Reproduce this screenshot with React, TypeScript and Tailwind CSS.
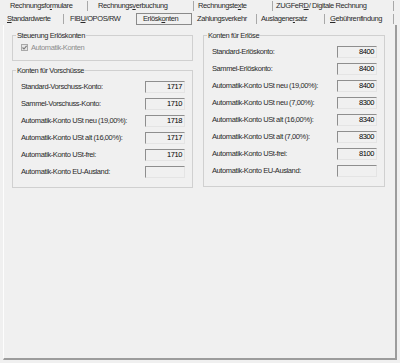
import React from 'react';

type Row = { label: string; value: string };

const vorschuss: Row[] = [
  { label: 'Standard-Vorschuss-Konto:', value: '1717' },
  { label: 'Sammel-Vorschuss-Konto:', value: '1710' },
  { label: 'Automatik-Konto USt neu (19,00%):', value: '1718' },
  { label: 'Automatik-Konto USt alt (16,00%):', value: '1717' },
  { label: 'Automatik-Konto USt-frei:', value: '1710' },
  { label: 'Automatik-Konto EU-Ausland:', value: '' },
];

const erloese: Row[] = [
  { label: 'Standard-Erlöskonto:', value: '8400' },
  { label: 'Sammel-Erlöskonto:', value: '8400' },
  { label: 'Automatik-Konto USt neu (19,00%):', value: '8400' },
  { label: 'Automatik-Konto USt neu (7,00%):', value: '8300' },
  { label: 'Automatik-Konto USt alt (16,00%):', value: '8340' },
  { label: 'Automatik-Konto USt alt (7,00%):', value: '8300' },
  { label: 'Automatik-Konto USt-frei:', value: '8100' },
  { label: 'Automatik-Konto EU-Ausland:', value: '' },
];

// underline the mnemonic letter like a win32 tab caption
const Mn: React.FC<{ pre: string; key_: string; post: string }> = ({ pre, key_, post }) => (
  <span className="whitespace-nowrap">
    {pre}
    <span className="underline underline-offset-1">{key_}</span>
    {post}
  </span>
);

const AccountRow: React.FC<{ row: Row }> = ({ row }) => (
  <div className="flex h-[17px] items-center justify-between">
    <span className="whitespace-nowrap">{row.label}</span>
    <div className="flex h-[12px] w-[40px] items-center justify-end border-t border-l border-b border-r border-t-[#8e8e8e] border-l-[#8e8e8e] border-b-[#e4e4e4] border-r-[#e4e4e4] pr-[2px] text-black">
      {row.value}
    </div>
  </div>
);

const Group: React.FC<{ title: string; className?: string; children: React.ReactNode }> = ({ title, className = '', children }) => (
  <fieldset className={`border border-[#d0d0d0] px-0 ${className}`}>
    <legend className="ml-[3px] px-[1px] leading-[9px]">{title}</legend>
    {children}
  </fieldset>
);

export default function App() {
  return (
    <div className="h-[363px] w-[400px] overflow-hidden bg-[#f0f0f0] font-['Liberation_Sans',Arial,sans-serif] text-[7.5px] leading-[9px] tracking-[-0.4px] text-[#2a2a2a]">
      {/* tab row 1 */}
      <div className="flex h-[12px] items-center">
        <div className="h-[10px] w-[88px] border-r border-[#a8a8a8] pl-[10px]">
          <Mn pre="Rechnungsfo" key_="r" post="mulare" />
        </div>
        <div className="h-[10px] w-[106px] border-r border-[#a8a8a8] pl-[10px]">
          <Mn pre="Rechnungs" key_="v" post="erbuchung" />
        </div>
        <div className="h-[10px] w-[79px] border-r border-[#a8a8a8] pl-[4px]">
          <Mn pre="Rechnungste" key_="x" post="te" />
        </div>
        <div className="h-[10px] w-[121px] border-r border-[#a8a8a8] pl-[3px]">
          <Mn pre="ZUGFeR" key_="D" post="/ Digitale Rechnung" />
        </div>
      </div>

      {/* tab row 2 */}
      <div className="flex h-[13px] items-center">
        <div className="h-[10px] w-[64px] border-r border-[#a8a8a8] pl-[7px]">
          <Mn pre="" key_="S" post="tandardwerte" />
        </div>
        <div className="h-[10px] w-[72px] pl-[6px]">
          <Mn pre="FIB" key_="U" post="/OPOS/RW" />
        </div>
        <div className="flex h-[12px] w-[56px] items-center border border-[#8a8a8a] pl-[6px]">
          <Mn pre="Erlösk" key_="o" post="nten" />
        </div>
        <div className="h-[10px] w-[65px] border-r border-[#a8a8a8] pl-[5px]">
          <span className="whitespace-nowrap">Zahlungsverkehr</span>
        </div>
        <div className="h-[10px] w-[68px] border-r border-[#a8a8a8] pl-[4px]">
          <Mn pre="Auslagene" key_="r" post="satz" />
        </div>
        <div className="h-[10px] w-[69px] border-r border-[#a8a8a8] pl-[5px]">
          <Mn pre="" key_="G" post="ebührenfindung" />
        </div>
      </div>

      {/* page */}
      <div className="ml-[3px] h-[335px] w-[394px] border-l border-r-2 border-b-2 border-l-[#fdfdfd] border-r-[#9c9c9c] border-b-[#9c9c9c] pt-[6px] pl-[8px]">
        <div className="flex gap-[10px]">
          <div className="flex w-[181px] flex-col gap-[5px]">
            <Group title="Steuerung Erlöskonten" className="h-[30px]">
              <div className="flex h-[12px] items-center pl-[8px] pt-[2px] text-[#8d8d8d]">
                <svg width="7" height="7" viewBox="0 0 7 7" className="mr-[3px]">
                  <rect x="0.5" y="0.5" width="6" height="6" fill="#e6e6e6" stroke="#a9a9a9" />
                  <path d="M1.5 3.5 L3 5 L5.6 1.8" fill="none" stroke="#7a7a7a" strokeWidth="1.1" />
                </svg>
                <span>Automatik-Konten</span>
              </div>
            </Group>
            <Group title="Konten für Vorschüsse" className="h-[122px]">
              <div className="pt-[3px] pl-[8px] pr-[7px]">
                {vorschuss.map((r, i) => (
                  <AccountRow key={i} row={r} />
                ))}
              </div>
            </Group>
          </div>
          <Group title="Konten für Erlöse" className="h-[156px] w-[182px]">
            <div className="pt-[3px] pl-[8px] pr-[7px]">
              {erloese.map((r, i) => (
                <AccountRow key={i} row={r} />
              ))}
            </div>
          </Group>
        </div>
      </div>
    </div>
  );
}
